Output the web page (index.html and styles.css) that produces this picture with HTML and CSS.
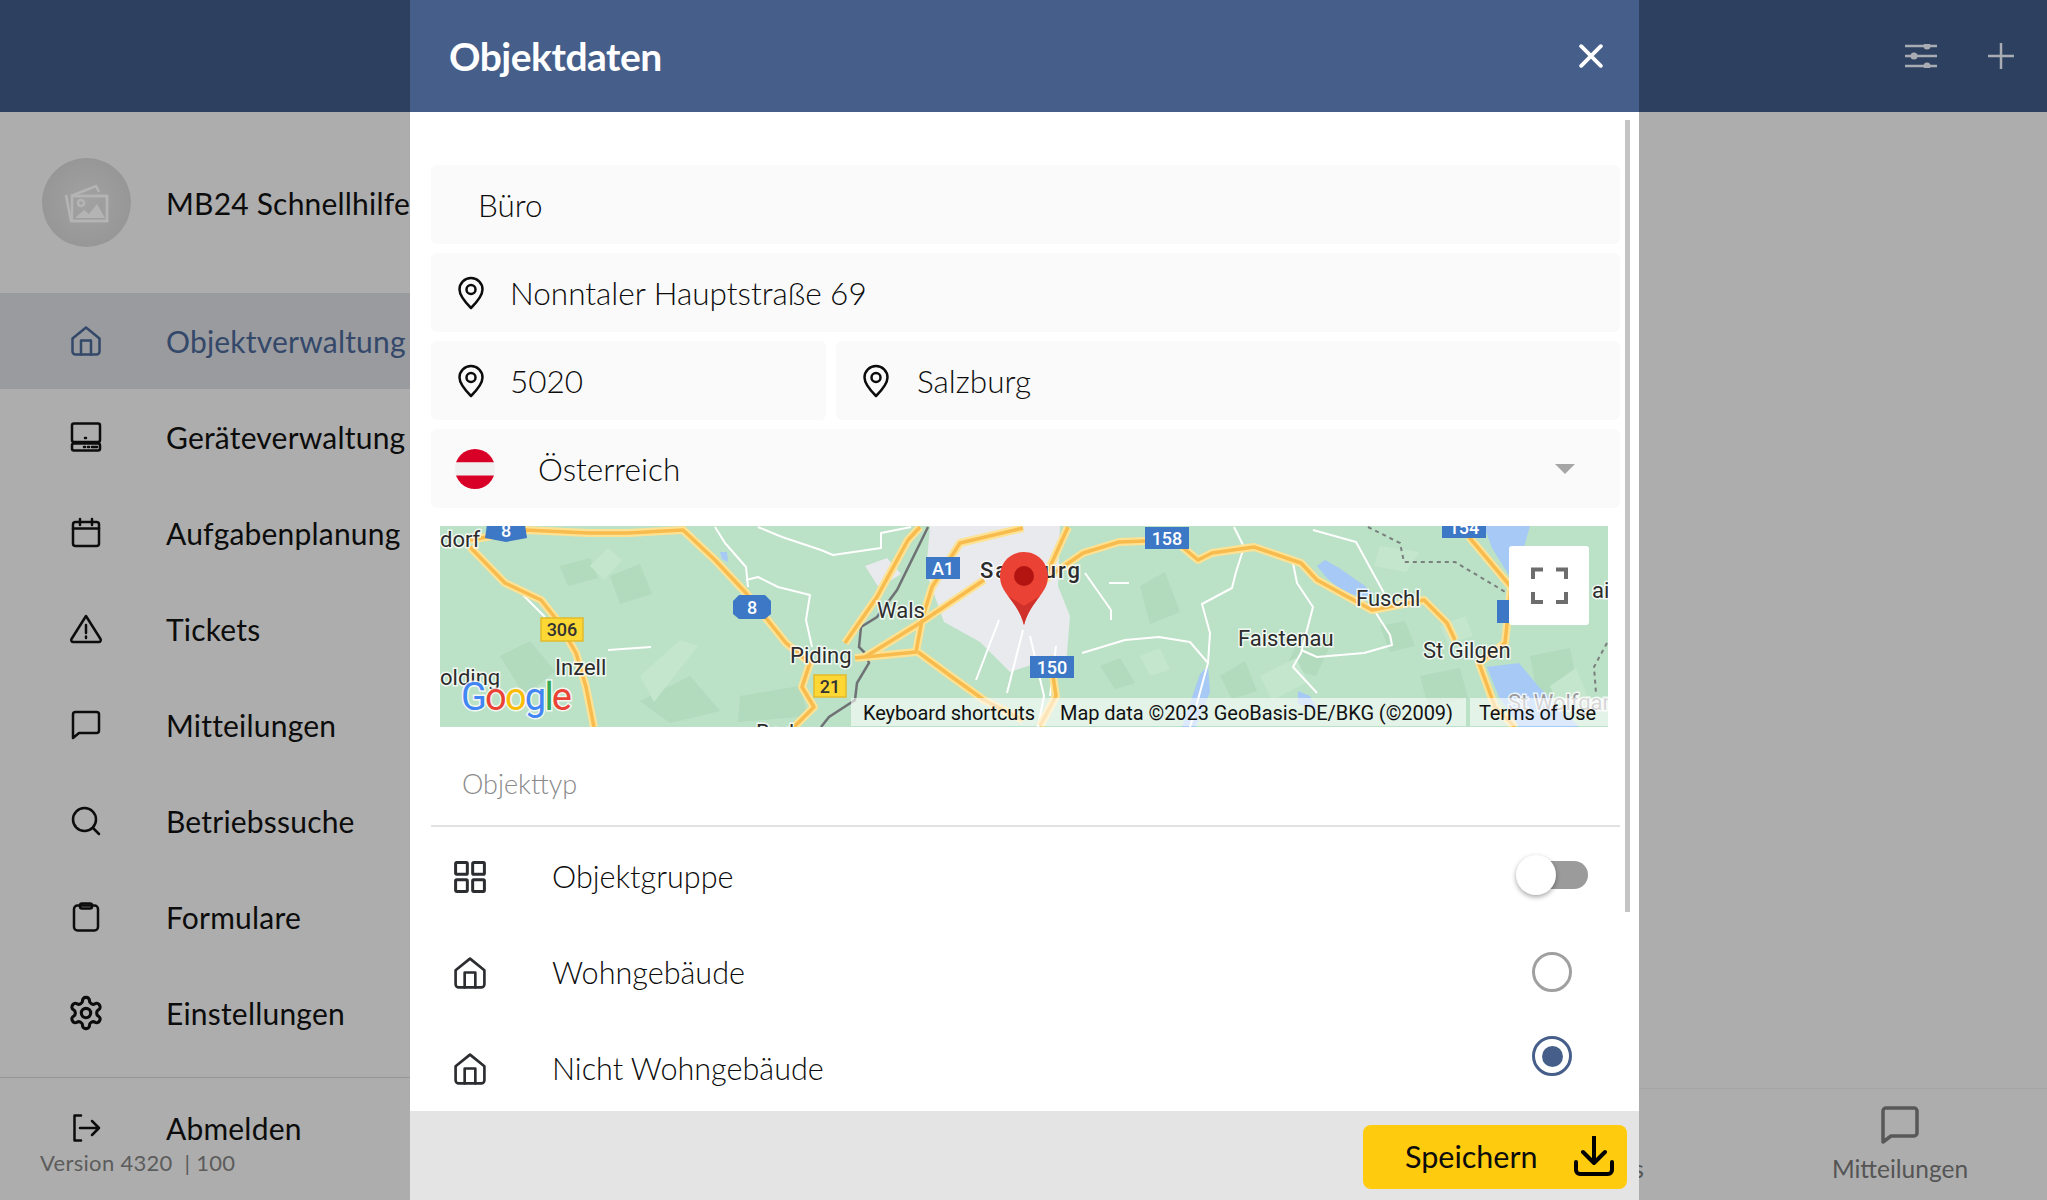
FILE: index.html
```html
<!DOCTYPE html>
<html lang="de">
<head>
<meta charset="utf-8">
<title>Objektdaten</title>
<link rel="stylesheet" href="styles.css">
</head>
<body>
<svg class="defs" width="0" height="0" aria-hidden="true">
  <symbol id="i-home" viewBox="0 0 30 30"><path d="M1.500 12.500 15 1.500l13.500 11V25.500a3 3 0 0 1-3 3h-21a3 3 0 0 1-3-3Z"/><path d="M10 28.500V14.500h10v14"/></symbol>
  <symbol id="i-pin" viewBox="0 0 28 34"><path d="M14 32C8 26 2.500 20 2.500 13.500a11.500 11.500 0 0 1 23 0C25.500 20 20 26 14 32Z"/><circle cx="14" cy="13.500" r="4.500"/></symbol>
</svg>

<div class="app">
  <header class="topbar">
    <div class="top-actions">
      <svg class="top-icon" viewBox="0 0 32 24"><path d="M0 2h32M0 12h32M0 22h32"/><circle class="knob" cx="22" cy="2" r="3.500"/><circle class="knob" cx="9" cy="12" r="3.500"/><circle class="knob" cx="22" cy="22" r="3.500"/></svg>
      <svg class="top-icon plus" viewBox="0 0 26 26"><path d="M0 13h26M13 0v26"/></svg>
    </div>
  </header>
  <div class="content">
    <aside class="sidebar">
      <div class="brand">
        <div class="avatar">
          <svg viewBox="0 0 48 40"><path d="M8 13 33 3l3 6"/><path d="M3 12l5 26h36V13H8"/><rect x="9" y="13" width="35" height="25"/><circle cx="18" cy="20" r="3"/><path class="fill" d="M12 35l9-8 5 4 8-10 8 14Z"/></svg>
        </div>
        <span class="brand-name">MB24 Schnellhilfe</span>
      </div>
      <nav class="nav">
        <a class="nav-item active"><svg class="nav-icon" viewBox="0 0 30 30"><use href="#i-home"/></svg><span>Objektverwaltung</span></a>
        <a class="nav-item"><svg class="nav-icon" viewBox="0 0 30 30"><rect x="1" y="1.500" width="28" height="18.500" rx="2"/><rect x="1" y="21.500" width="28" height="7" rx="2"/><path d="M14 16h1M13 25h1M17 25h1M21 25h5"/></svg><span>Geräteverwaltung</span></a>
        <a class="nav-item"><svg class="nav-icon" viewBox="0 0 30 30"><rect x="2" y="4" width="26" height="24" rx="2.500"/><path d="M2 10.500h26M9 1v6M21 1v6"/></svg><span>Aufgabenplanung</span></a>
        <a class="nav-item"><svg class="nav-icon" viewBox="1 0 30 30"><path d="M16 2 30.500 25a2 2 0 0 1-1.800 3H3.300a2 2 0 0 1-1.800-3Z"/><path d="M16 11v8M16 22.500v1.500"/></svg><span>Tickets</span></a>
        <a class="nav-item"><svg class="nav-icon" viewBox="0 0 30 30"><path d="M2 4.500A2.500 2.500 0 0 1 4.500 2h21A2.500 2.500 0 0 1 28 4.500v16a2.500 2.500 0 0 1-2.500 2.500H8l-6 5Z"/></svg><span>Mitteilungen</span></a>
        <a class="nav-item"><svg class="nav-icon" viewBox="0 0 30 30"><circle cx="13.500" cy="13.500" r="11.500"/><path d="m22 22 6 6"/></svg><span>Betriebssuche</span></a>
        <a class="nav-item"><svg class="nav-icon" viewBox="0 0 30 30"><rect x="3" y="3.500" width="24" height="25" rx="3.500"/><rect x="9" y="1.500" width="12" height="5" rx="2"/></svg><span>Formulare</span></a>
        <a class="nav-item"><svg class="nav-icon gear" viewBox="0 0 24 24"><path d="M12.220 2h-.44a2 2 0 0 0-2 2v.18a2 2 0 0 1-1 1.730l-.43.25a2 2 0 0 1-2 0l-.15-.08a2 2 0 0 0-2.730.73l-.22.38a2 2 0 0 0 .73 2.730l.15.1a2 2 0 0 1 1 1.720v.51a2 2 0 0 1-1 1.740l-.15.09a2 2 0 0 0-.73 2.730l.22.38a2 2 0 0 0 2.730.73l.15-.08a2 2 0 0 1 2 0l.43.25a2 2 0 0 1 1 1.730V20a2 2 0 0 0 2 2h.44a2 2 0 0 0 2-2v-.18a2 2 0 0 1 1-1.730l.43-.25a2 2 0 0 1 2 0l.15.08a2 2 0 0 0 2.730-.73l.22-.39a2 2 0 0 0-.73-2.730l-.15-.08a2 2 0 0 1-1-1.740v-.5a2 2 0 0 1 1-1.740l.15-.09a2 2 0 0 0 .73-2.730l-.22-.38a2 2 0 0 0-2.730-.73l-.15.08a2 2 0 0 1-2 0l-.43-.25a2 2 0 0 1-1-1.730V4a2 2 0 0 0-2-2Z"/><circle cx="12" cy="12" r="3"/></svg><span>Einstellungen</span></a>
      </nav>
      <div class="side-foot">
        <a class="nav-item logout"><svg class="nav-icon" viewBox="0 0 30 30"><path d="M10 2.500H3.500v25H10M9 15h19M21 8l7 7-7 7"/></svg><span>Abmelden</span></a>
        <p class="version">Version 4320&nbsp; | 100</p>
      </div>
    </aside>
    <main class="main">
      <div class="tabbar">
        <div class="tab">
          <svg class="tab-icon" viewBox="0 0 38 38"><path d="M2 5a3 3 0 0 1 3-3h28a3 3 0 0 1 3 3v22a3 3 0 0 1-3 3H10l-8 6Z"/></svg>
          <span>Tickets</span>
        </div>
        <div class="tab">
          <svg class="tab-icon" viewBox="0 0 38 38"><path d="M2 5a3 3 0 0 1 3-3h28a3 3 0 0 1 3 3v22a3 3 0 0 1-3 3H10l-8 6Z"/></svg>
          <span>Mitteilungen</span>
        </div>
      </div>
    </main>
  </div>

  <section class="modal">
    <div class="modal-head">
      <h1>Objektdaten</h1>
      <svg class="close" viewBox="0 0 22 22"><path d="M2 2l18 18M20 2 2 20"/></svg>
    </div>
    <div class="modal-body">
      <div class="scrollbar"></div>
      <div class="fields">
        <div class="field plain">Büro</div>
        <div class="field"><svg class="pin" viewBox="0 0 28 34"><use href="#i-pin"/></svg><span>Nonntaler Hauptstraße 69</span></div>
        <div class="field-row">
          <div class="field zip"><svg class="pin" viewBox="0 0 28 34"><use href="#i-pin"/></svg><span>5020</span></div>
          <div class="field city"><svg class="pin" viewBox="0 0 28 34"><use href="#i-pin"/></svg><span>Salzburg</span></div>
        </div>
        <div class="field country">
          <svg class="flag" viewBox="0 0 40 40"><defs><clipPath id="flag-clip"><circle cx="20" cy="20" r="20"/></clipPath></defs><g clip-path="url(#flag-clip)"><rect width="40" height="13.500" fill="#d80027"/><rect y="13.500" width="40" height="13" fill="#f0f0f0"/><rect y="26.500" width="40" height="13.500" fill="#d80027"/></g></svg>
          <span>Österreich</span>
          <i class="caret"></i>
        </div>
      </div>

      <svg class="map" viewBox="0 0 1168 201" preserveAspectRatio="none">
        <defs>
          <clipPath id="map-clip"><rect width="1168" height="201"/></clipPath>
          <path id="r1" d="M30 14 85 4l63 3 40 0 55-3 32 30 31 33 40 50 24 20-8 24 12 20-20 20"/>
          <path id="r2" d="M30 21 65 57l36 17 16 20 19 33 10 34 8 40"/>
          <path id="r3" d="M415 132l61-6 6-32 10-33 28-44 63-15"/>
          <path id="r4" d="M478 126l34 25 32 23 39 20"/>
          <path id="r5" d="M425 131l55-34 64-43"/>
          <path id="r6" d="M405 117l32-46 31-57 12-13"/>
          <path id="r7" d="M604 54l24-53M604 54l39-27 36-11 55-2 24 20 14-7 42-6 47 16 16 17 31 17 24 13 52-10 23 23 8 17"/>
          <path id="r8" d="M1029 11l42 50-6 56-26 20 16 44 20 20M610 130l6 40-16 30"/>
        </defs>
        <g clip-path="url(#map-clip)">
          <rect width="1168" height="201" fill="#bbe1c6"/>
          <g fill="#b2dabd">
            <path d="M60 130l30-15 25 30-30 25Z"/><path d="M170 50l30-12 12 30-32 10Z"/><path d="M300 170l60-10 8 30-70 6Z"/><path d="M700 60l25-14 15 40-30 12Z"/><path d="M860 110l30 10-14 30-30-8Z"/><path d="M980 150l40-8 8 30-40 8Z"/><path d="M1090 130l40-8 8 40-40 8Z"/><path d="M200 175l50-25 30 35-50 12Z"/><path d="M120 40l30-8 8 20-30 8Z"/><path d="M780 150l25-15 12 30-25 8Z"/><path d="M940 100l25-5 10 25-25 6Z"/><path d="M660 140l20-8 15 25-20 6Z"/>
          </g>
          <g fill="#c4e6cd">
            <path d="M150 40l18-18 14 12-18 20Z"/><path d="M200 150l40-36 18 6-44 56Z"/><path d="M820 150l36-18 12 24-36 18Z"/><path d="M940 20l40 6-14 20-32-6Z"/><path d="M1110 160l26-18 14 34-30 8Z"/><path d="M700 130l20-8 10 22-20 6Z"/><path d="M1000 100l25-10 8 20-25 8Z"/>
          </g>
          <path fill="#e8eaed" d="M490 0h130l-2 60 12 30-4 50-26-4-30 10-30-30-36-20-18-50Z"/>
          <path fill="#e8eaed" d="M425 40l22-8 14 16-22 14Z"/>
          <g fill="#a6c9f6">
            <path d="M877 40l8-6 14 8 26 18 8 8-6 4-24-6-16-14Z"/>
            <path d="M1044 0h46l-8 28 4 22-14 4-20-32Z"/>
            <path d="M1047 141l32-4 20 24 40 40h-60l-20-30Z"/>
            <path d="M760 148l8-8 2 26-14 35h-14Z"/>
            <path d="M858 165l12 5 8 14-20-6Z"/>
            <path d="M280 26l7 0 1 10-6-3Z"/>
          </g>
          <g class="minor">
            <path d="M275 1l10 16 21 24 2 20"/>
            <path d="M318 1l24 10 39 13 12 5 48-7V7l30-6"/>
            <path d="M306 54l12-3 20 10 32 8-4 25 6 27"/>
            <path d="M168 124l43-3"/>
            <path d="M83 69l22 22"/>
            <path d="M794 1l10 20-8 25-4 16-30 16 8 29-2 30-12 44-6 20"/>
            <path d="M642 127l43-13 34-3 31 5 18 21"/>
            <path d="M645 47l26 37v10M669 57h20"/>
            <path d="M853 37l4 20 16 24-12 46-8 14 24 26"/>
            <path d="M861 124l16 7 47-4 28-8-2-10-14-22"/>
            <path d="M873 4l43 12 28 51"/>
            <path d="M536 154l23-60M567 167l16-63M590 110l14 60-6 31M616 120l-6 50"/>
          </g>
          <path class="trail" d="M488 1 457 64 437 91 421 101 419 121 425 127 429 137 417 157 415 174 389 191 381 201"/>
          <g class="border-line">
            <path d="M928 1 960 17 964 36 1015 36 1067 67"/>
            <path d="M1167 117 1154 141 1156 167"/>
          </g>
          <g class="road-case">
            <use href="#r1"/><use href="#r2"/><use href="#r3"/><use href="#r4"/><use href="#r5"/><use href="#r6"/><use href="#r7"/><use href="#r8"/>
          </g>
          <g class="road-core">
            <use href="#r1"/><use href="#r2"/><use href="#r3"/><use href="#r4"/><use href="#r5"/><use href="#r6"/><use href="#r7"/><use href="#r8"/>
          </g>

          <g class="shield blue">
            <path d="M48-8h36l3 20-21 4-21-4Z"/><path d="M293 75l6-6h26l6 6v13l-6 5h-26l-6-5Z"/>
            <rect x="486" y="31" width="34" height="22"/><rect x="705" y="1" width="44" height="22"/><rect x="590" y="130" width="44" height="22"/><rect x="1002" y="-10" width="44" height="22"/><rect x="1057" y="74" width="20" height="23"/>
          </g>
          <g class="shield yellow">
            <rect x="101" y="92" width="42" height="23"/><rect x="374" y="149" width="32" height="22"/>
          </g>
          <g class="shield-text">
            <text x="66" y="11" fill="#fff">8</text><text x="312" y="88" fill="#fff">8</text><text x="503" y="49" fill="#fff">A1</text><text x="727" y="19" fill="#fff">158</text><text x="612" y="148" fill="#fff">150</text><text x="1024" y="8" fill="#fff">154</text>
            <text x="122" y="110" fill="#333">306</text><text x="390" y="167" fill="#333">21</text>
          </g>

          <g class="map-label">
            <text x="0" y="21">dorf</text><text x="437" y="92">Wals</text><text x="350" y="137">Piding</text><text x="115" y="149">Inzell</text><text x="0" y="159">olding</text><text x="316" y="214">Bad</text><text x="540" y="52" class="strong" textLength="100">Salzburg</text><text x="916" y="80">Fuschl</text><text x="798" y="120">Faistenau</text><text x="983" y="132">St Gilgen</text><text x="1068" y="184" class="faint">St Wolfgangsee</text><text x="1152" y="72">ai</text>
          </g>

          <path d="M584 26c-14 0-24 11-24 24 0 8 3 13 8 20 7 9 13 17 16 29 3-12 9-20 16-29 5-7 8-12 8-20 0-13-10-24-24-24Z" fill="#ea4335"/>
          <path d="M584 99c-3-12-9-20-16-29l16 10 16-10c-7 9-13 17-16 29Z" fill="#d0312a"/>
          <circle cx="584" cy="50" r="10" fill="#b31412"/>

          <g class="map-foot-bar"><rect x="411" y="172" width="195" height="28"/><rect x="606" y="172" width="420" height="28"/><rect x="1030" y="172" width="138" height="28"/></g>
          <g class="map-foot">
            <text x="423" y="194" textLength="172">Keyboard shortcuts</text>
            <text x="620" y="194" textLength="393">Map data ©2023 GeoBasis-DE/BKG (©2009)</text>
            <text x="1039" y="194" textLength="117">Terms of Use</text>
          </g>
          <text class="google" x="21" y="184" textLength="111"><tspan fill="#4285f4">G</tspan><tspan fill="#ea4335">o</tspan><tspan fill="#fbbc05">o</tspan><tspan fill="#4285f4">g</tspan><tspan fill="#34a853">l</tspan><tspan fill="#ea4335">e</tspan></text>

          <rect x="1069" y="20" width="80" height="79" rx="3" fill="#fff"/>
          <path class="fs" d="M1093 53V43.500h10M1116 43.500h10V53M1126 66v10h-10M1103 76h-10V66"/>
        </g>
      </svg>

      <div class="type-label">Objekttyp</div>
      <div class="type-row">
        <svg class="type-icon" viewBox="0 0 30 30"><rect x="1.500" y="1.500" width="11" height="11" rx="1"/><rect x="17.500" y="1.500" width="11" height="11" rx="1"/><rect x="1.500" y="17.500" width="11" height="11" rx="1"/><rect x="17.500" y="17.500" width="11" height="11" rx="1"/></svg>
        <span>Objektgruppe</span>
        <div class="toggle"><i></i></div>
      </div>
      <div class="type-row">
        <svg class="type-icon" viewBox="0 0 30 30"><use href="#i-home"/></svg>
        <span>Wohngebäude</span>
        <div class="radio first"></div>
      </div>
      <div class="type-row">
        <svg class="type-icon" viewBox="0 0 30 30"><use href="#i-home"/></svg>
        <span>Nicht Wohngebäude</span>
        <div class="radio checked"><i></i></div>
      </div>
    </div>
    <div class="modal-foot">
      <button class="save">
        <span>Speichern</span>
        <svg viewBox="0 0 40 40"><path d="M20 1v26M9 16l11 11 11-11M2 26v8a4 4 0 0 0 4 4h28a4 4 0 0 0 4-4v-8"/></svg>
      </button>
    </div>
  </section>
</div>
</body>
</html>
```
FILE: styles.css
```css
* { box-sizing: border-box; }
html, body { margin: 0; height: 100%; overflow: hidden; }
body { font-family: Lato, "Open Sans", sans-serif; background: #adadad; color: #0c0c0c; }
.defs { position: absolute; }
symbol path, symbol circle { fill: none; stroke: currentColor; stroke-width: 2.5; stroke-linejoin: round; stroke-linecap: round; }

.app { position: relative; width: 2047px; height: 1200px; display: flex; flex-direction: column; }
.topbar { height: 112px; flex: none; background: #2e405f; display: flex; justify-content: flex-end; align-items: center; }
.top-actions { display: flex; align-items: center; gap: 51px; padding-right: 33px; }
.top-icon { width: 32px; height: 24px; fill: none; stroke: #a9adb3; stroke-width: 2.5; }
.top-icon .knob { fill: #a9adb3; stroke: none; }
.top-icon.plus { width: 26px; height: 26px; stroke-width: 2.500; }

.content { flex: 1; display: flex; min-height: 0; }
.sidebar { width: 410px; flex: none; display: flex; flex-direction: column; overflow: hidden; background: #adadad; }
.brand { height: 181px; flex: none; display: flex; align-items: center; padding-left: 42px; gap: 35px; white-space: nowrap; }
.avatar { width: 89px; height: 89px; border-radius: 50%; flex: none; display: flex; align-items: center; justify-content: center; background: radial-gradient(circle, #a2a2a2 0%, #929292 100%); }
.avatar svg { width: 48px; height: 40px; fill: none; stroke: #b4b4b4; stroke-width: 2.5; }
.avatar .fill { fill: #b4b4b4; stroke: none; }
.brand-name { font-size: 30px; letter-spacing: 0.2px; }
.nav { display: flex; flex-direction: column; }
.nav-item { height: 96px; display: flex; align-items: center; font-size: 30px; padding-left: 71px; gap: 65px; white-space: nowrap; letter-spacing: 0.2px; }
.nav-item.active { background: #9a9b9f; color: #34486a; }
.nav-icon { width: 30px; height: 30px; flex: none; overflow: visible; fill: none; stroke: currentColor; stroke-width: 2.5; stroke-linejoin: round; stroke-linecap: round; }
.nav-icon.gear { stroke-width: 2; transform: scale(1.25); }
.side-foot { border-top: 1px solid #969696; margin-top: 16px; }
.logout { height: 100px; }
.version { margin: -30px 0 0 40px; font-size: 22px; color: #5c5c5c; line-height: 30px; letter-spacing: 0.3px; }

.main { flex: 1; display: flex; flex-direction: column; justify-content: flex-end; }
.tabbar { height: 112px; border-top: 1px solid #a5a5a5; display: flex; justify-content: flex-end; }
.tab { width: 294px; padding-top: 17px; display: flex; flex-direction: column; align-items: center; gap: 10px; color: #555; font-size: 24.5px; }
.tab-icon { width: 38px; height: 38px; fill: none; stroke: #585858; stroke-width: 3.500; stroke-linejoin: round; }

.modal { position: absolute; left: 410px; top: 0; width: 1229px; height: 1200px; display: flex; flex-direction: column; background: #fff; }
.modal-head { height: 112px; flex: none; background: #465e8a; color: #fff; display: flex; align-items: center; justify-content: space-between; padding: 0 36px 0 39px; }
.modal-head h1 { margin: 0; font-size: 39px; font-weight: 700; letter-spacing: -0.5px; }
.close { width: 24px; height: 24px; fill: none; stroke: #fff; stroke-width: 3.500; stroke-linecap: round; }
.modal-body { position: relative; flex: 1; min-height: 0; overflow: hidden; padding: 53px 19px 0 21px; }
.scrollbar { position: absolute; right: 9px; top: 8px; width: 5px; height: 792px; background: #c4c4c4; }
.fields { display: flex; flex-direction: column; gap: 9px; }
.field { height: 79px; background: #fafafa; border-radius: 6px; display: flex; align-items: center; padding-left: 26px; gap: 25px; font-size: 31.5px; font-weight: 300; color: #0c0c0c; }
.field.plain { padding-left: 47px; }
.field-row { display: flex; gap: 10px; }
.zip { width: 395px; flex: none; }
.city { flex: 1; padding-left: 26px; gap: 27px; }
.pin { width: 28px; height: 34px; flex: none; }
.country { padding-left: 24px; gap: 43px; position: relative; }
.flag { width: 40px; height: 40px; flex: none; }
.caret { position: absolute; right: 45px; top: 35px; width: 0; height: 0; border-left: 10px solid transparent; border-right: 10px solid transparent; border-top: 10px solid #a6a6a6; }

.map { display: block; width: 1168px; height: 201px; margin: 18px 0 0 9px; }
.minor path { fill: none; stroke: #fff; stroke-width: 2; stroke-linejoin: round; }
.trail { fill: none; stroke: #6f7275; stroke-width: 2.500; }
.border-line path { fill: none; stroke: #7a7f7d; stroke-width: 2; stroke-dasharray: 4 4; }
.road-case use { fill: none; stroke: #fde293; stroke-width: 8; stroke-linejoin: round; }
.road-core use { fill: none; stroke: #f8bb4e; stroke-width: 3.500; stroke-linejoin: round; }
.shield.blue { fill: #3c78c6; }
.shield.yellow { fill: #fdd835; stroke: #e3ba2a; stroke-width: 1.500; }
.shield-text text { font-family: Roboto, sans-serif; font-size: 18px; font-weight: 500; text-anchor: middle; }
.map-label text { font-family: Roboto, sans-serif; font-size: 22px; fill: #2c2c2c; stroke: #fff; stroke-width: 3; paint-order: stroke; stroke-opacity: .8; }
.map-label .strong { font-weight: 500; }
.map-label .faint { fill: #9a9a9a; }
.map-foot-bar rect { fill: #fff; fill-opacity: .6; }
.map-foot text { font-family: Roboto, sans-serif; font-size: 20px; fill: #111; }
.google { font-family: Roboto, sans-serif; font-size: 38px; stroke: #fff; stroke-width: 3; paint-order: stroke; stroke-opacity: .8; }
.fs { fill: none; stroke: #6d6d6d; stroke-width: 4; }

.type-label { height: 100px; padding: 40px 0 0 31px; font-size: 27px; font-weight: 300; color: #8a8a8a; border-bottom: 2px solid #e2e2e2; }
.type-row { height: 96px; display: flex; align-items: center; font-size: 30.600px; font-weight: 300; }
.type-row > span { flex: 1; margin-left: 66px; padding-bottom: 1px; }
.type-label + .type-row { margin-top: 2px; }
.type-icon { width: 32px; height: 32px; flex: none; margin-left: 23px; fill: none; stroke: #2b2d30; stroke-width: 2.800; color: #2b2d30; }
.toggle { position: relative; width: 58px; height: 28px; margin: 0 32px 5px 0; border-radius: 14px; background: #9b9b9b; }
.toggle i { position: absolute; left: -14px; top: -6px; width: 40px; height: 40px; border-radius: 50%; background: #fff; box-shadow: 0 2px 5px rgba(0,0,0,.35); }
.radio { width: 40px; height: 40px; border-radius: 50%; border: 3px solid #a0a0a0; margin-right: 48px; display: flex; align-items: center; justify-content: center; }
.radio.first { margin-bottom: 3px; }
.radio.checked { border-color: #465e8a; margin-bottom: 26px; }
.radio i { width: 21px; height: 21px; border-radius: 50%; background: #465e8a; }

.modal-foot { height: 89px; flex: none; background: #e4e4e4; display: flex; justify-content: flex-end; align-items: flex-start; padding: 14px 12px 0 0; }
.save { width: 264px; height: 64px; border: 0; border-radius: 8px; background: #ffcb0f; display: flex; align-items: center; padding: 0 13px 3px 42px; justify-content: space-between; font-family: inherit; font-size: 30.500px; color: #0c0c0c; }
.save svg { width: 40px; height: 40px; fill: none; stroke: #000; stroke-width: 4; stroke-linecap: round; stroke-linejoin: round; }
```
